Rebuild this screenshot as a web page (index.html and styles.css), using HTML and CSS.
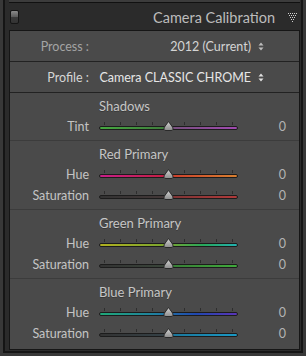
FILE: index.html
```html
<!DOCTYPE html>
<html lang="en">
<head>
    <meta charset="UTF-8">
    <title>Camera Calibration</title>
    <link rel="stylesheet" href="styles.css">
</head>
<body>
<div class="frame">
    <div class="prev-panel"></div>

    <!-- panel header -->
    <div class="header">
        <span class="switch"></span>
        <span class="header-title">Camera Calibration</span>
        <svg class="collapse" width="9" height="9" viewBox="0 0 9 9">
            <g fill="#d0d0d0">
                <rect x="0" y="0" width="1" height="1"/><rect x="2" y="0" width="1" height="1"/><rect x="4" y="0" width="1" height="1"/><rect x="6" y="0" width="1" height="1"/><rect x="8" y="0" width="1" height="1"/>
                <rect x="1" y="2" width="1" height="1"/><rect x="3" y="2" width="1" height="1"/><rect x="5" y="2" width="1" height="1"/><rect x="7" y="2" width="1" height="1"/>
                <rect x="2" y="4" width="1" height="1"/><rect x="4" y="4" width="1" height="1"/><rect x="6" y="4" width="1" height="1"/>
                <rect x="3" y="6" width="1" height="1"/><rect x="5" y="6" width="1" height="1"/>
                <rect x="4" y="8" width="1" height="1"/>
            </g>
        </svg>
    </div>

    <div class="panel">
        <div class="popup-row">
            <span class="popup-label dim">Process :</span>
            <span class="popup-value">2012 (Current)</span>
            <svg class="updown" width="6" height="9" viewBox="0 0 6 9"><path d="M3 0.5 L5.5 3.5 L0.5 3.5 Z M3 8.5 L5.5 5.5 L0.5 5.5 Z" fill="#bdbdbd"/></svg>
        </div>
        <div class="popup-row">
            <span class="popup-label">Profile :</span>
            <span class="popup-value bright">Camera CLASSIC CHROME</span>
            <svg class="updown" width="6" height="9" viewBox="0 0 6 9"><path d="M3 0.5 L5.5 3.5 L0.5 3.5 Z M3 8.5 L5.5 5.5 L0.5 5.5 Z" fill="#e0e0e0"/></svg>
        </div>

        <div class="section" id="sliders"></div>
    </div>
</div>

<script>
    // slider groups with their track gradients
    const groups = [
        { title: "Shadows", rows: [
            { label: "Tint", track: "linear-gradient(to right, #46a840, #3f7a3c 50%, #74507a 50%, #a04ab0)" }
        ]},
        { title: "Red Primary", rows: [
            { label: "Hue", track: "linear-gradient(to right, #c81e88, #c42040 50%, #cc3c2c 50%, #d88030)" },
            { label: "Saturation", track: "linear-gradient(to right, #333, #443838 50%, #7c3434 50%, #b03a3a)" }
        ]},
        { title: "Green Primary", rows: [
            { label: "Hue", track: "linear-gradient(to right, #b0b020, #78a430 50%, #28a85a, #22b0b0)" },
            { label: "Saturation", track: "linear-gradient(to right, #333, #3a463a 50%, #387c36 50%, #40aa3c)" }
        ]},
        { title: "Blue Primary", rows: [
            { label: "Hue", track: "linear-gradient(to right, #20a878, #2080a0 40%, #2048b0 70%, #5a34b8)" },
            { label: "Saturation", track: "linear-gradient(to right, #333, #354248 50%, #1c7498 50%, #1a98c4)" }
        ]}
    ];

    const thumb = '<svg class="thumb" width="11" height="10" viewBox="0 0 11 10">' +
        '<defs><linearGradient id="tg" x1="0" y1="0" x2="0" y2="1"><stop offset="0" stop-color="#d2d2d2"/><stop offset="1" stop-color="#8c8c8c"/></linearGradient></defs>' +
        '<path d="M5.5 0.5 L8.8 5 Q10.4 7 10 8.4 Q9.6 9.5 8 9.5 L3 9.5 Q1.4 9.5 1 8.4 Q0.6 7 2.2 5 Z" fill="url(#tg)" stroke="#2a2a2a" stroke-width="1"/></svg>';

    const container = document.getElementById('sliders');
    container.outerHTML = groups.map(function (g) {
        const rows = g.rows.map(function (r) {
            let ticks = '';
            for (let i = 0; i < 9; i++) ticks += '<span class="tick"></span>';
            return '<div class="slider-row">' +
                '<span class="slider-label">' + r.label + '</span>' +
                '<span class="slider"><span class="ticks">' + ticks + '</span>' +
                '<span class="track" style="background:' + r.track + '"></span>' + thumb + '</span>' +
                '<span class="slider-value">0</span></div>';
        }).join('');
        return '<div class="group"><div class="group-title">' + g.title + '</div>' + rows + '</div>';
    }).join('');
</script>
</body>
</html>
```

FILE: styles.css
```css
body {
    margin: 0;
    width: 306px;
    height: 356px;
    background: #383838;
    font-family: Lato, "Open Sans", sans-serif;
    overflow: hidden;
}
.frame {
    margin: 0 3px;
    height: 353px;
    box-sizing: border-box;
    background: #2b2b2b;
    border-left: 2px solid #151515;
    border-right: 2px solid #151515;
    border-bottom: 2px solid #151515;
    padding: 0 1px 2px 4px;
}
.prev-panel {
    height: 2px;
    background: #3c3c3c;
    border-bottom: 1px solid #111;
}
.header {
    height: 27px;
    display: flex;
    align-items: center;
}
.switch {
    width: 7px;
    height: 12px;
    margin-left: 1px;
    margin-top: 1px;
    border: 1px solid #151515;
    border-radius: 2px;
    background: linear-gradient(#8a8a8a, #5e5e5e 46%, #151515 46%, #151515 54%, #3a3a3a 54%, #333);
}
.header-title {
    margin-left: auto;
    color: #bcbcbc;
    font-size: 14.5px;
    padding-top: 1px;
}
.collapse {
    margin: 1px 3px 0 13px;
}
.panel {
    border: 1px solid #161616;
    background: #4a4a4a;
}
.popup-row {
    height: 30px;
    border-bottom: 1px solid #222;
    display: flex;
    align-items: center;
    font-size: 12.5px;
}
.popup-label {
    width: 79px;
    text-align: right;
    color: #d6d6d6;
}
.popup-label.dim {
    color: #a4a4a4;
}
.popup-value {
    flex: 1;
    text-align: right;
    color: #d4d4d4;
}
.popup-value.bright {
    color: #e6e6e6;
}
.updown {
    margin: 0 35px 0 7px;
}
.group {
    padding: 5px 0 3px;
    border-bottom: 1px solid #3c3c3c;
}
.group:first-child {
    padding-bottom: 4px;
}
.group:last-child {
    border-bottom: none;
    padding-bottom: 5px;
}
.group-title {
    height: 16px;
    line-height: 16px;
    margin: 0 0 2px 89px;
    font-size: 13px;
    color: #c6c6c6;
    text-shadow: 0 1px 0 rgba(0, 0, 0, 0.25);
}
.slider-row {
    height: 21px;
    display: grid;
    grid-template-columns: 79px 139px 38px;
    column-gap: 10px;
    align-items: center;
    font-size: 12.5px;
}
.slider-label {
    text-align: right;
    color: #c4c4c4;
}
.slider-value {
    text-align: right;
    color: #b4b4b4;
}
.slider {
    position: relative;
    height: 21px;
}
.ticks {
    position: absolute;
    left: 5px;
    right: 5px;
    top: 6px;
    height: 3px;
    display: flex;
    justify-content: space-between;
}
.tick {
    width: 1px;
    height: 3px;
    background: #2e2e2e;
}
.track {
    position: absolute;
    left: 0;
    right: 0;
    top: 10px;
    height: 2px;
    border: 1px solid #1c1c1c;
    border-radius: 2px;
}
.thumb {
    position: absolute;
    left: 64px;
    top: 5px;
}
```
